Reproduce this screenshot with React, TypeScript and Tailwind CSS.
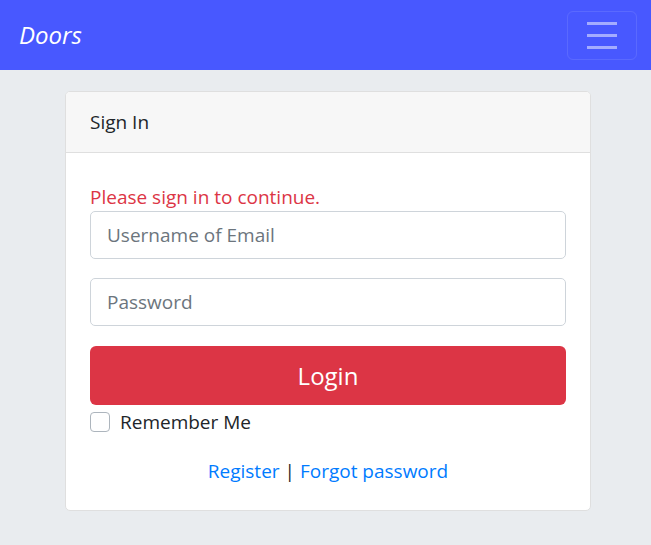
import React from 'react';

const App: React.FC = () => {
  return (
    <div className="min-h-[545px] bg-[#e9ecef] text-[19px] leading-[30px] text-[#212529]" style={{ fontFamily: '"Segoe UI", "Open Sans", "Noto Sans", sans-serif' }}>
      <nav className="h-[70px] bg-[#4858ff] flex items-center justify-between pl-[19px] pr-[14px]">
        <span className="text-white italic text-[24px] leading-[30px]">Doors</span>
        <button className="w-[70px] h-[49px] rounded-[6px] border border-white/10 flex flex-col items-center justify-center gap-[9px]">
          <span className="block w-[30px] h-[3px] bg-white/50" />
          <span className="block w-[30px] h-[3px] bg-white/50" />
          <span className="block w-[30px] h-[3px] bg-white/50" />
        </button>
      </nav>

      <div className="pt-[21px] pl-[65px]">
        <div className="w-[526px] bg-white border border-[#dfdfdf] rounded-[5px] overflow-hidden">
          <div className="bg-[#f7f7f7] border-b border-[#dfdfdf] px-[24px] py-[15px]">Sign In</div>
          <div className="px-[24px] pt-[30px] pb-[24px]">
            <div className="text-[#dc3545] leading-[28px]">Please sign in to continue.</div>
            <input
              className="w-full h-[48px] border border-[#ced4da] rounded-[5px] px-[16px] text-[19px] placeholder:text-[#6c757d] outline-none"
              placeholder="Username of Email"
            />
            <input
              type="password"
              className="mt-[19px] w-full h-[48px] border border-[#ced4da] rounded-[5px] px-[16px] text-[19px] placeholder:text-[#6c757d] outline-none"
              placeholder="Password"
            />
            <button className="mt-[20px] w-full h-[59px] bg-[#dc3545] rounded-[6px] text-white text-[24px]">Login</button>
            <label className="flex items-center gap-[10px] mt-[2px] h-[30px]">
              <span className="block w-[20px] h-[20px] border border-[#adb5bd] rounded-[4px] bg-white" />
              <span>Remember Me</span>
            </label>
            <div className="text-center mt-[19px]">
              <a className="text-[#007bff]">Register</a> | <a className="text-[#007bff]">Forgot password</a>
            </div>
          </div>
        </div>
      </div>
    </div>
  );
};

export default App;
